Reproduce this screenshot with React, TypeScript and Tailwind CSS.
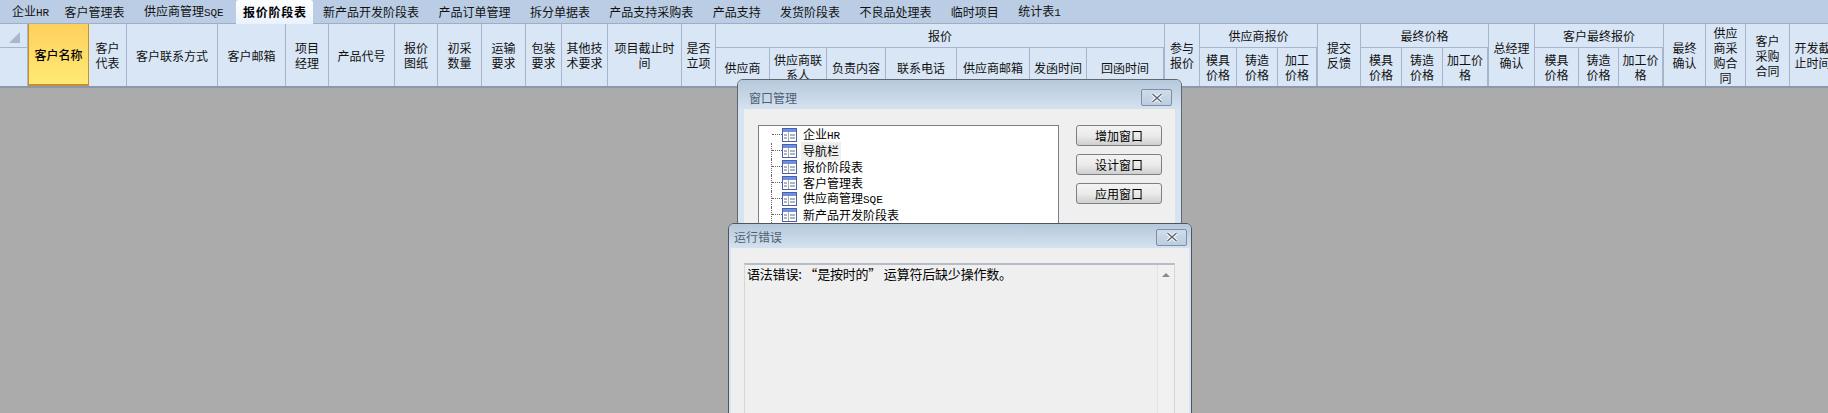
import type { ReactNode } from 'react';

const TABS: { label: string; latin?: string; pad?: string; active?: boolean }[] = [
  { label: '企业', latin: 'HR', pad: 'pl-[11px] pr-[5.6px]' },
  { label: '客户管理表' },
  { label: '供应商管理', latin: 'SQE' },
  { label: '报价阶段表', active: true },
  { label: '新产品开发阶段表' },
  { label: '产品订单管理' },
  { label: '拆分单据表' },
  { label: '产品支持采购表' },
  { label: '产品支持' },
  { label: '发货阶段表' },
  { label: '不良品处理表' },
  { label: '临时项目' },
  { label: '统计表', latin: '1' },
];

const TREE: { label: string; latin?: string; selected?: boolean }[] = [
  { label: '企业', latin: 'HR' },
  { label: '导航栏', selected: true },
  { label: '报价阶段表' },
  { label: '客户管理表' },
  { label: '供应商管理', latin: 'SQE' },
  { label: '新产品开发阶段表' },
  { label: '产品订单管理' },
];

function Latin({ children }: { children: ReactNode }) {
  return <span className="font-['Liberation_Mono',monospace] text-[11px]">{children}</span>;
}

function Cell({ width, children, yellow }: { width: number; children: string; yellow?: boolean }) {
  return (
    <div
      className={
        yellow
          ? 'flex h-full shrink-0 items-center justify-center whitespace-pre-line border-x border-b-2 border-[#c98f2e] bg-gradient-to-b from-[#fed05c] to-[#ffe975] text-center leading-[15px] font-medium text-black'
          : 'flex h-full shrink-0 items-center justify-center whitespace-pre-line border-r border-[#a6b4cd] text-center leading-[15px]'
      }
      style={{ width }}
    >
      {children}
    </div>
  );
}

function Group({ title, cols }: { title: string; cols: [string, number][] }) {
  const total = cols.reduce((sum, c) => sum + c[1], 0);
  return (
    <div className="flex h-full shrink-0 flex-col border-r border-[#a6b4cd]" style={{ width: total }}>
      <div className="flex h-[24px] shrink-0 items-center justify-center border-b border-[#a6b4cd]">{title}</div>
      <div className="flex min-h-0 flex-1">
        {cols.map(([label, w], i) => (
          <Cell key={i} width={i === cols.length - 1 ? w - 1 : w}>
            {label}
          </Cell>
        ))}
      </div>
    </div>
  );
}

function CloseButton() {
  return (
    <div className="flex h-[17px] w-[31px] items-center justify-center rounded-[2px] border border-[#7d8ea6] bg-gradient-to-b from-[#cfdcea] to-[#bccddf]">
      <svg width="12" height="10" viewBox="0 0 12 10">
        <path d="M1.5 1 L10.5 9 M10.5 1 L1.5 9" stroke="#fff" strokeWidth="3.4" />
        <path d="M1.5 1 L10.5 9 M10.5 1 L1.5 9" stroke="#5d6b7c" strokeWidth="1.6" />
      </svg>
    </div>
  );
}

function TableIcon() {
  return (
    <svg width="15" height="14" viewBox="0 0 15 14" className="shrink-0">
      <rect x="0.5" y="0.5" width="14" height="13" fill="#fff" stroke="#4a5fa8" />
      <rect x="1" y="1" width="13" height="3" fill="#6d8fe0" />
      <path d="M2 7 H5 M2 10 H5 M8 7 H13 M8 10 H13" stroke="#5c6a80" strokeWidth="1.2" />
      <path d="M6.5 4 V13" stroke="#9fb0c8" />
    </svg>
  );
}

function DialogButton({ children }: { children: string }) {
  return (
    <div className="flex h-[21px] w-[86px] items-center justify-center rounded-[3px] border border-[#7f7f7f] bg-gradient-to-b from-[#f3f3f3] via-[#ebebeb] to-[#cfcfcf] text-black">
      {children}
    </div>
  );
}

export default function App() {
  return (
    <div className="relative h-[413px] w-[1828px] overflow-hidden bg-[#ababab] font-['Noto_Sans_CJK_SC',sans-serif] text-[12px] text-[#111]">
      {/* Tabs */}
      <div className="flex h-[24px] items-end border-b border-[#a0aec4] bg-[#bacde4] pl-[1px]">
        {TABS.map((t, i) =>
          t.active ? (
            <div
              key={i}
              className="relative z-10 mb-[-1px] ml-[3px] flex h-[24px] w-[77px] items-center justify-center rounded-t-[3px] bg-gradient-to-b from-white to-[#e9f2fd] font-bold tracking-[0.8px] text-black"
            >
              {t.label}
            </div>
          ) : (
            <div key={i} className={`flex h-[23px] items-center ${t.pad ?? 'px-[9.7px]'}`}>
              <span>
                {t.label}
                {t.latin && <Latin>{t.latin}</Latin>}
              </span>
            </div>
          ),
        )}
      </div>

      {/* Column header */}
      <div className="flex h-[64px] overflow-hidden border-b-2 border-[#8c98ad] bg-[#d9e6f5]">
        <div className="flex h-full w-[28px] shrink-0 flex-col border-r border-[#a6b4cd]">
          <div className="flex h-[24px] items-end justify-end border-b border-[#a6b4cd] pb-[4px] pr-[7px]">
            <div className="h-0 w-0 border-b-[11px] border-l-[11px] border-b-[#a9b8cf] border-l-transparent" />
          </div>
        </div>
        <Cell width={61} yellow>客户名称</Cell>
        <Cell width={38}>{'客户\n代表'}</Cell>
        <Cell width={91}>客户联系方式</Cell>
        <Cell width={68}>客户邮箱</Cell>
        <Cell width={43}>{'项目\n经理'}</Cell>
        <Cell width={66}>产品代号</Cell>
        <Cell width={43}>{'报价\n图纸'}</Cell>
        <Cell width={44}>{'初采\n数量'}</Cell>
        <Cell width={44}>{'运输\n要求'}</Cell>
        <Cell width={36}>{'包装\n要求'}</Cell>
        <Cell width={46}>{'其他技\n术要求'}</Cell>
        <Cell width={74}>{'项目截止时\n间'}</Cell>
        <Cell width={34}>{'是否\n立项'}</Cell>
        <Group
          title="报价"
          cols={[
            ['供应商', 54],
            ['供应商联\n系人', 57],
            ['负责内容', 59],
            ['联系电话', 71],
            ['供应商邮箱', 73],
            ['发函时间', 57],
            ['回函时间', 78],
          ]}
        />
        <Cell width={35}>{'参与\n报价'}</Cell>
        <Group
          title="供应商报价"
          cols={[
            ['模具\n价格', 37],
            ['铸造\n价格', 41],
            ['加工\n价格', 40],
          ]}
        />
        <Cell width={43}>{'提交\n反馈'}</Cell>
        <Group
          title="最终价格"
          cols={[
            ['模具\n价格', 41],
            ['铸造\n价格', 41],
            ['加工价\n格', 46],
          ]}
        />
        <Cell width={46}>{'总经理\n确认'}</Cell>
        <Group
          title="客户最终报价"
          cols={[
            ['模具\n价格', 44],
            ['铸造\n价格', 40],
            ['加工价\n格', 45],
          ]}
        />
        <Cell width={42}>{'最终\n确认'}</Cell>
        <Cell width={40}>{'供应\n商采\n购合\n同'}</Cell>
        <Cell width={44}>{'客户\n采购\n合同'}</Cell>
        <Cell width={46}>{'开发截\n止时间'}</Cell>
      </div>

      {/* Window manager dialog */}
      <div className="absolute left-[737px] top-[79px] flex h-[170px] w-[445px] flex-col rounded-t-[6px] border border-[#5f6670] bg-[#d6e3f1]">
        <div className="flex h-[29px] shrink-0 items-center justify-between rounded-t-[5px] bg-gradient-to-b from-[#b6c8db] to-[#d4e2f0] pl-[11px] pr-[9px] pt-[6px] text-[#4e6073]">
          窗口管理
          <CloseButton />
        </div>
        <div className="mx-[6px] flex min-h-0 flex-1 gap-[17px] bg-[#efefef] pl-[14px] pr-[13px] pt-[16px]">
          <div className="flex h-[140px] w-[301px] flex-col border border-[#7b7f85] bg-white pt-[1px] text-black">
            {TREE.map((row, i) => (
              <div key={i} className="flex h-[16px] shrink-0 items-center">
                <div className={`ml-[12px] flex w-[11px] flex-col self-stretch border-l border-dotted ${i === 0 ? 'border-transparent' : 'border-[#666]'}`}>
                  <div className="h-[8px] border-b border-dotted border-[#666]" />
                </div>
                <TableIcon />
                <span className={`ml-[4px] px-[2px] ${row.selected ? 'bg-[#eeeeee]' : ''}`}>
                  {row.label}
                  {row.latin && <Latin>{row.latin}</Latin>}
                </span>
              </div>
            ))}
          </div>
          <div className="flex flex-col gap-[8px]">
            <DialogButton>增加窗口</DialogButton>
            <DialogButton>设计窗口</DialogButton>
            <DialogButton>应用窗口</DialogButton>
          </div>
        </div>
      </div>

      {/* Runtime error dialog */}
      <div className="absolute left-[728px] top-[223px] flex h-[200px] w-[464px] flex-col rounded-t-[6px] border border-[#4f555e] bg-[#d6e3f1]">
        <div className="flex h-[24px] shrink-0 items-center justify-between rounded-t-[5px] bg-gradient-to-b from-[#b6c8db] to-[#d4e2f0] pl-[5px] pr-[4px] pt-[2px] text-[#4e6073]">
          运行错误
          <CloseButton />
        </div>
        <div className="mx-[2px] min-h-0 flex-1 bg-[#efefef] pl-[13px] pr-[14px] pt-[15px]">
          <div className="flex h-[160px] border-l border-t-2 border-r border-[#b9bcc6] border-l-[#d6d6d6] border-r-[#d6d6d6]">
            <div className="flex-1 pl-[2px] text-[13px] leading-[17px] tracking-[-0.2px] text-black">
              语法错误: “是按时的” 运算符后缺少操作数。
            </div>
            <div className="flex w-[17px] shrink-0 justify-center border-l border-[#e2e2e2] bg-[#f1f1f1] pt-[8px]">
              <div className="h-0 w-0 border-x-[4px] border-b-[4px] border-x-transparent border-b-[#8a8a8a]" />
            </div>
          </div>
        </div>
      </div>
    </div>
  );
}
